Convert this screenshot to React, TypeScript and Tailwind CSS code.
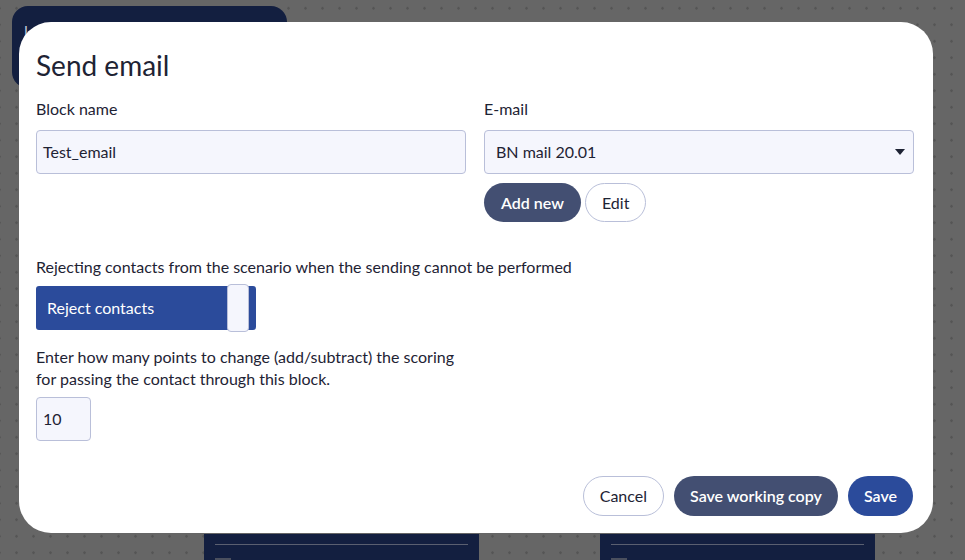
import React from 'react';

const font = { fontFamily: 'Lato, "Noto Sans", sans-serif' };

function BackgroundCanvas() {
  return (
    <div className="absolute inset-0 bg-[#666666] bg-[radial-gradient(circle,#555555_1px,transparent_1.5px)] bg-[length:17px_16.5px] bg-[position:8px_0px]">
      {/* blocks of the scenario behind the dialog */}
      <div className="absolute left-[12px] top-[6px] w-[275px] h-[82px] rounded-[16px] bg-[#131f40] px-3 pt-3">
        <span className="text-[#c9cfe0] text-sm">Le Start</span>
      </div>
      <div className="absolute left-[204px] top-[534px] w-[275px] h-[60px] bg-[#131f40] px-[11px] pt-[10px]">
        <div className="h-px bg-[#5a5f70]" />
        <div className="flex items-center gap-2 mt-[11px]">
          <div className="w-4 h-4 bg-[#4a4f5e]" />
          <span className="text-[#c9cfe0] text-sm">Reject contacts</span>
        </div>
      </div>
      <div className="absolute left-[600px] top-[534px] w-[275px] h-[60px] bg-[#131f40] px-[11px] pt-[10px]">
        <div className="h-px bg-[#5a5f70]" />
        <div className="flex items-center gap-2 mt-[11px]">
          <div className="w-4 h-4 bg-[#4a4f5e]" />
          <span className="text-[#c9cfe0] text-sm">Reject contacts when sending</span>
        </div>
      </div>
    </div>
  );
}

export default function App() {
  return (
    <div className="relative w-[965px] h-[560px] overflow-hidden" style={font}>
      <BackgroundCanvas />

      {/* Modal */}
      <div className="absolute left-[19px] top-[22px] w-[914px] h-[511px] bg-white rounded-[32px] pl-[17px] pr-[19px] pt-[24px] pb-[17px] flex flex-col text-[#1e2334]">
        <h1 className="text-[28px] leading-[38px] font-normal">Send email</h1>

        <div className="grid grid-cols-2 gap-[18px] mt-[14px]">
          <div>
            <label className="block text-[16px] leading-[22px]">Block name</label>
            <div className="mt-[10px] h-[44px] rounded-[4px] border border-[#b9bfd9] bg-[#f5f6fd] flex items-center px-[6px] text-[16px]">
              Test_email
            </div>
          </div>
          <div>
            <label className="block text-[16px] leading-[22px]">E-mail</label>
            <div className="mt-[10px] h-[44px] rounded-[4px] border border-[#b9bfd9] bg-[#f5f6fd] flex items-center justify-between pl-[11px] pr-[8px] text-[16px]">
              <span>BN mail 20.01</span>
              <svg width="10" height="6" viewBox="0 0 10 6">
                <path d="M0 0h10L5 6z" fill="#1e2334" />
              </svg>
            </div>
            <div className="flex gap-[4px] mt-[9px]">
              <button className="h-[39px] px-[17px] rounded-full bg-[#434f72] text-white text-[16px] font-semibold">
                Add new
              </button>
              <button className="h-[39px] px-[16px] rounded-full border border-[#b9bfd9] bg-white text-[16px]">
                Edit
              </button>
            </div>
          </div>
        </div>

        <p className="mt-[34px] text-[16px] leading-[22px]">
          Rejecting contacts from the scenario when the sending cannot be performed
        </p>
        <div className="mt-[8px] flex items-center">
          <div className="relative w-[220px] h-[44px] rounded-[3px] bg-[#2b4b9b] flex items-center pl-[11px] text-white text-[16px]">
            Reject contacts
            <div className="absolute left-[191px] top-[-2px] w-[22px] h-[48px] rounded-[4px] bg-[#f5f6fd] border border-[#b9bfd9]" />
          </div>
        </div>

        <p className="mt-[16px] text-[16px] leading-[22px] w-[440px]">
          Enter how many points to change (add/subtract) the scoring for passing the contact through this block.
        </p>
        <div className="mt-[7px] w-[55px] h-[44px] rounded-[4px] border border-[#b9bfd9] bg-[#f5f6fd] flex items-center px-[6px] text-[16px]">
          10
        </div>

        <div className="mt-auto flex justify-end gap-[10px] pr-[1px]">
          <button className="h-[40px] px-[16px] rounded-full border border-[#b9bfd9] bg-white text-[16px]">
            Cancel
          </button>
          <button className="h-[40px] px-[16px] rounded-full bg-[#434f72] text-white text-[16px] font-semibold">
            Save working copy
          </button>
          <button className="h-[40px] px-[16px] rounded-full bg-[#2b4b9b] text-white text-[16px] font-semibold">
            Save
          </button>
        </div>
      </div>
    </div>
  );
}
